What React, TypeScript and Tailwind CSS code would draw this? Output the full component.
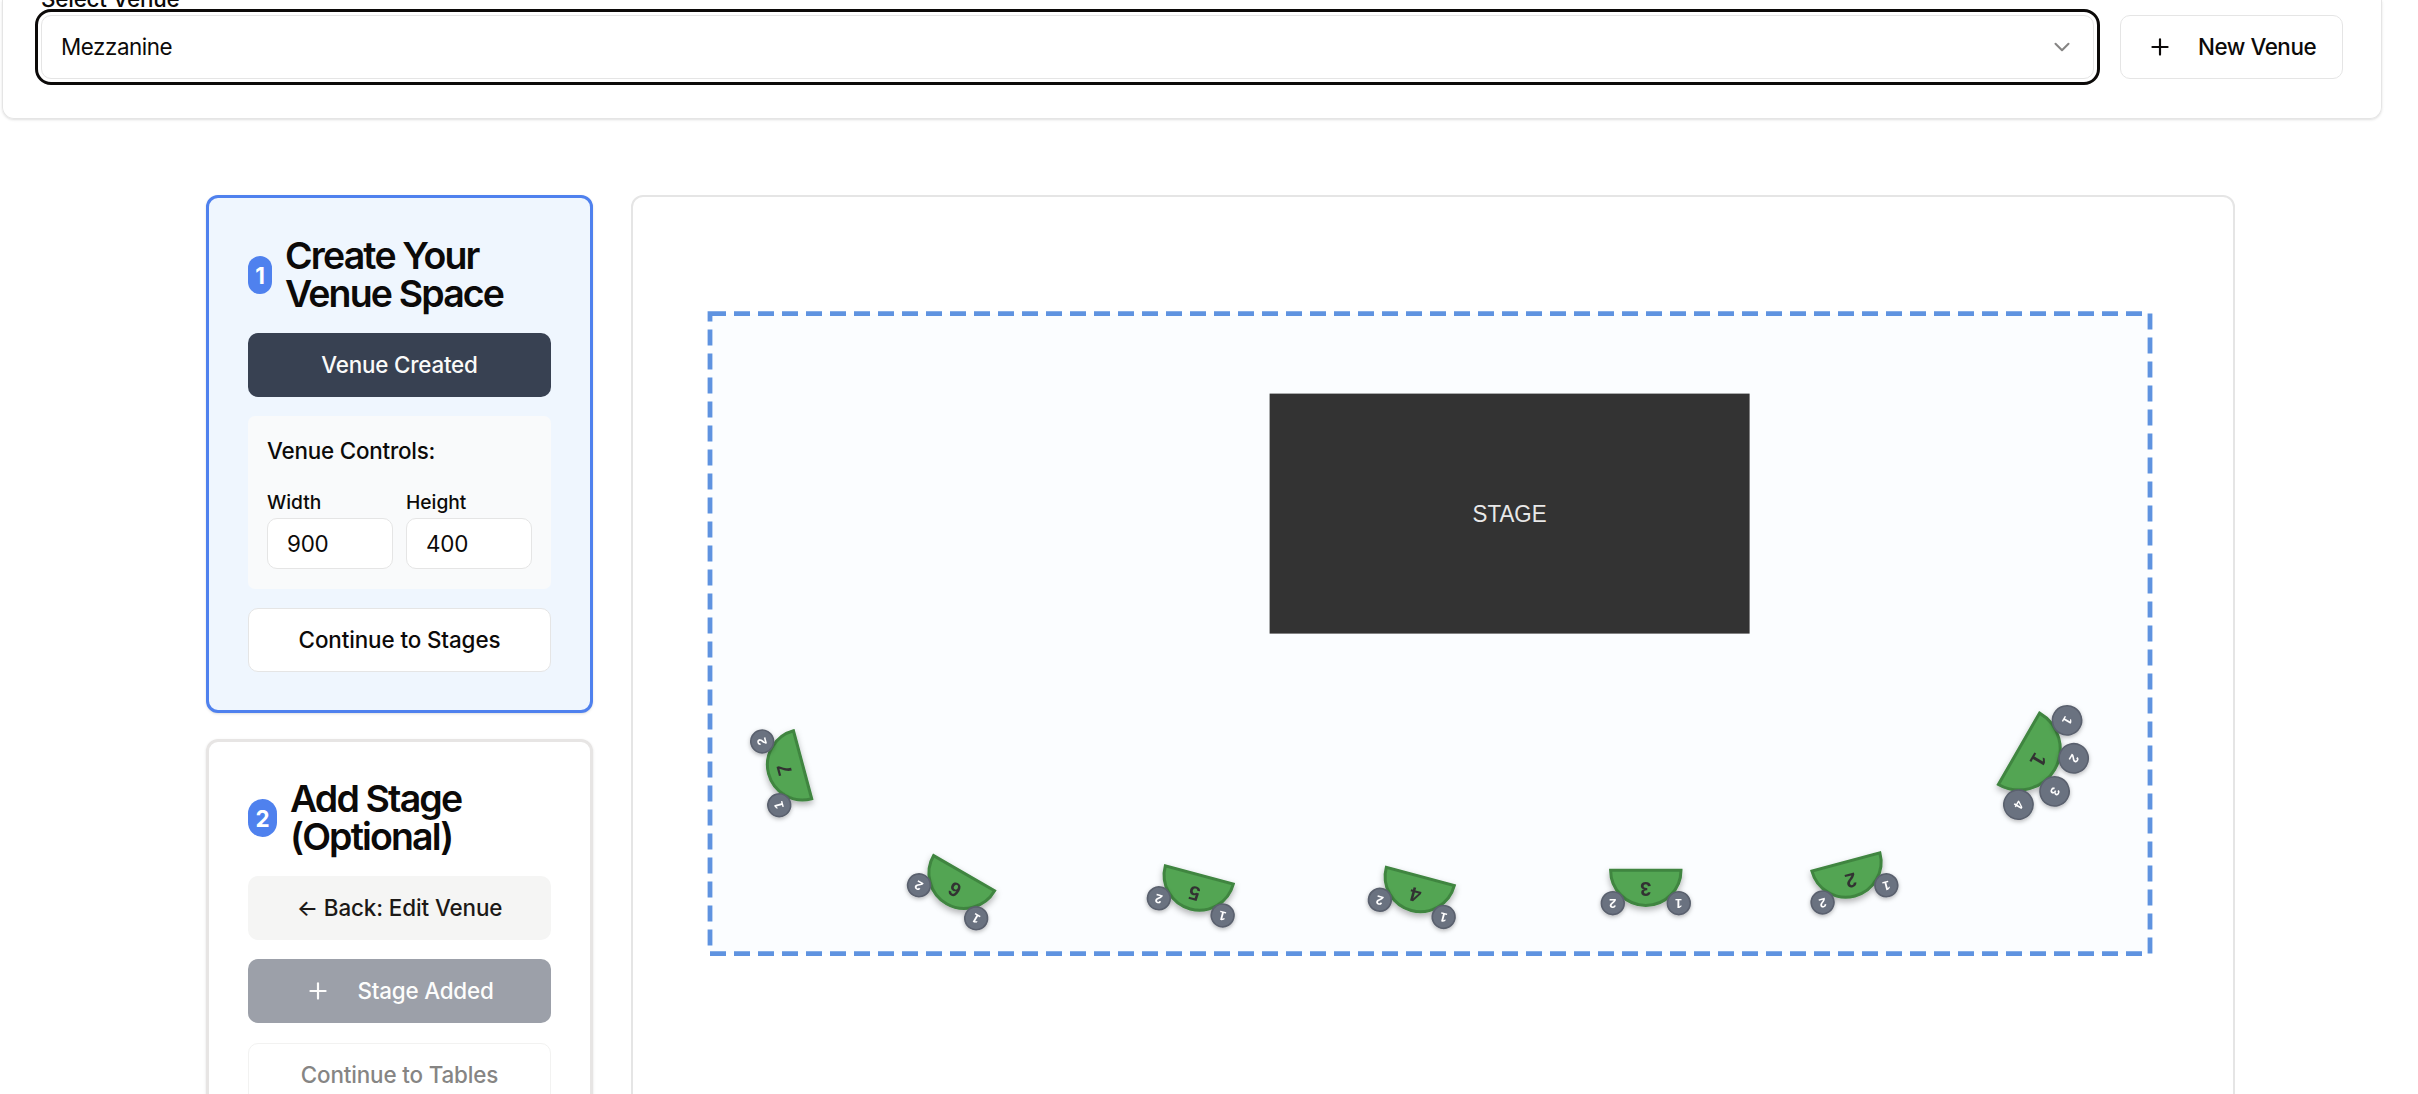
import React from "react";
import { ChevronDown, Plus } from "lucide-react";

type Seat = [number, number];

interface Table {
  label: string;
  x: number;
  y: number;
  angle: number;
  radius: number;
  seatRadius: number;
  seats: Seat[];
}

const PAIR: Seat[] = [
  [-33, -33],
  [33, -33],
];

const TABLES: Table[] = [
  { label: "1", x: 2019, y: 748.8, angle: 120, radius: 41.2, seatRadius: 14.6, seats: [[-48.6, -27.4], [-19.1, -52.1], [19.1, -52.1], [48.6, -27.4]] },
  { label: "2", x: 1845.9, y: 862, angle: 165, radius: 35.2, seatRadius: 11.4, seats: PAIR },
  { label: "3", x: 1645.8, y: 870.2, angle: 180, radius: 35.2, seatRadius: 11.4, seats: PAIR },
  { label: "4", x: 1420.3, y: 876.5, angle: 195, radius: 35.2, seatRadius: 11.4, seats: PAIR },
  { label: "5", x: 1199.3, y: 875, angle: 195, radius: 35.2, seatRadius: 11.4, seats: PAIR },
  { label: "6", x: 964.1, y: 873.2, angle: 210, radius: 35.2, seatRadius: 11.4, seats: PAIR },
  { label: "7", x: 802.6, y: 764.8, angle: 255, radius: 35.2, seatRadius: 11.4, seats: PAIR },
];

function HalfTable({ table }: { table: Table }) {
  const r = table.radius;
  const place = `translate(${table.x} ${table.y}) rotate(${table.angle})`;
  return (
    <g>
      <g filter="url(#tableShadow)">
        <g transform={place}>
          <path d={`M ${-r} 0 A ${r} ${r} 0 0 1 ${r} 0 Z`} fill="#52a552" stroke="#3f8540" strokeWidth="3" />
          <text x="0" y={r > 40 ? -15 : -12} textAnchor="middle" fontSize={r > 40 ? 21 : 20} fontWeight="700" fill="#333333">
            {table.label}
          </text>
        </g>
      </g>
      <g filter="url(#seatShadow)">
        <g transform={place}>
          {table.seats.map(([sx, sy], i) => (
            <g key={i}>
              <circle cx={sx} cy={sy} r={table.seatRadius} fill="#6b7280" stroke="#5a616e" strokeWidth="1.6" />
              <text x={sx} y={sy + 4} textAnchor="middle" fontSize="12.8" fontWeight="700" fill="#ffffff">
                {i + 1}
              </text>
            </g>
          ))}
        </g>
      </g>
    </g>
  );
}

function VenueCanvas() {
  return (
    <svg width="1600" height="897" viewBox="633 197 1600 897" fontFamily="'Liberation Sans', Arial, sans-serif">
      <defs>
        <filter id="tableShadow" x="-30%" y="-30%" width="160%" height="180%">
          <feDropShadow dx="0" dy="3.2" stdDeviation="3.2" floodColor="#000000" floodOpacity="0.3" />
        </filter>
        <filter id="seatShadow" x="-30%" y="-30%" width="160%" height="180%">
          <feDropShadow dx="0" dy="1.6" stdDeviation="2" floodColor="#000000" floodOpacity="0.28" />
        </filter>
      </defs>
      <rect x="710" y="313.6" width="1440" height="640" fill="#fbfdff" stroke="#5f93e0" strokeWidth="4.8" strokeDasharray="16 8" />
      <rect x="1269.6" y="393.6" width="480" height="240" fill="#333333" />
      <text x="1509.6" y="522" textAnchor="middle" fontSize="23.4" textLength="74" lengthAdjust="spacingAndGlyphs" fill="#e8e8e8">
        STAGE
      </text>
      {TABLES.map((t) => (
        <HalfTable key={t.label} table={t} />
      ))}
    </svg>
  );
}

function StepHeading({ step, lines, badge }: { step: string; lines: string[]; badge: string }) {
  return (
    <div className="flex items-center gap-[13px]">
      <span className={`flex h-[38px] shrink-0 items-center justify-center rounded-full bg-[#4f81ee] text-[22.4px] font-bold text-white ${badge}`}>
        {step}
      </span>
      <h3 className="text-[37.5px] leading-[38.4px] font-semibold tracking-[-1.85px] whitespace-nowrap">
        {lines.map((l) => (
          <span key={l} className="block">
            {l}
          </span>
        ))}
      </h3>
    </div>
  );
}

function SizeField({ label, value }: { label: string; value: string }) {
  return (
    <div className="w-[126px]">
      <div className="text-[19.2px] leading-[26px] font-[450]">{label}</div>
      <div className="mt-[3px] flex h-[51px] items-center rounded-[10px] border border-[#e5e5e5] bg-white px-[19px] text-[22.4px] tracking-[-0.2px]">
        {value}
      </div>
    </div>
  );
}

export default function App() {
  return (
    <div className="h-[1094px] w-[2418px] overflow-hidden bg-white font-['Inter',sans-serif] text-[#0c0a09]">
      <section className="ml-[2px] flex h-[119px] w-[2380px] flex-col justify-end rounded-b-[12px] border border-t-0 border-[#e5e5e5] px-[38px] pb-[39px] shadow-sm">
        <label className="text-[22.4px] leading-[22px] font-[450] tracking-[-0.2px]">Select Venue</label>
        <div className="mt-[5px] flex gap-[26px]">
          <div className="flex h-16 w-[2053px] items-center justify-between rounded-[10px] border border-[#e5e5e5] pr-[18px] pl-[19px] text-[22.4px] tracking-[-0.45px] outline-[3.2px] outline-offset-[3.2px] outline-[#0c0a09] outline-solid">
            Mezzanine
            <ChevronDown size={26} strokeWidth={1.9} color="#868584" />
          </div>
          <button className="flex h-16 w-[223px] items-center rounded-[10px] border border-[#e5e5e5] pl-[26px] text-[22.4px] font-[450] tracking-[-0.45px]">
            <Plus size={26} strokeWidth={2} />
            <span className="ml-[25px]">New Venue</span>
          </button>
        </div>
      </section>

      <main className="mt-[76px] ml-[206px] flex items-start gap-[38px]">
        <aside className="flex w-[387px] flex-col gap-[26px]">
          <section className="flex h-[518px] flex-col rounded-[12px] border-3 border-[#4f81ee] bg-[#eff6fe] px-[39px] pt-[39px] shadow-sm">
            <StepHeading step="1" badge="w-6" lines={["Create Your", "Venue Space"]} />
            <button className="mt-[19px] h-16 shrink-0 rounded-[10px] bg-[#384152] text-[22.4px] font-[450] tracking-[-0.2px] text-[#fafaf9]">
              Venue Created
            </button>
            <div className="mt-[19px] h-[173px] shrink-0 rounded-[7px] bg-[#f9fafb] px-[19px] pt-[19px]">
              <div className="text-[22.4px] leading-8 font-[450] tracking-[-0.2px]">Venue Controls:</div>
              <div className="mt-[22px] flex gap-[13px]">
                <SizeField label="Width" value="900" />
                <SizeField label="Height" value="400" />
              </div>
            </div>
            <button className="mt-[19px] h-16 shrink-0 rounded-[10px] border border-[#e5e5e5] bg-white text-[22.4px] font-[450] tracking-[-0.1px]">
              Continue to Stages
            </button>
          </section>

          <section className="flex h-[518px] flex-col rounded-[12px] border-3 border-[#e7e5e4] px-[39px] pt-[38px] shadow-sm">
            <StepHeading step="2" badge="w-[29px]" lines={["Add Stage", "(Optional)"]} />
            <button className="mt-[19px] h-16 shrink-0 rounded-[10px] bg-[#f5f5f4] text-[22.4px] font-[450] tracking-[-0.1px] text-[#1c1917]">
              ← Back: Edit Venue
            </button>
            <button className="mt-[19px] flex h-16 shrink-0 items-center justify-center rounded-[10px] bg-[#9ca0a9] text-[22.4px] font-[450] tracking-[-0.2px] text-[#fdfdfc]">
              <Plus size={26} strokeWidth={2} />
              <span className="ml-[26px]">Stage Added</span>
            </button>
            <button className="mt-[20px] h-16 shrink-0 rounded-[10px] border border-[#f2f2f1] bg-white text-[22.4px] font-[450] tracking-[-0.15px] text-[#868584]">
              Continue to Tables
            </button>
          </section>
        </aside>

        <section className="h-[940px] w-[1604px] rounded-[12px] border-2 border-[#e5e5e5] bg-white">
          <VenueCanvas />
        </section>
      </main>
    </div>
  );
}
